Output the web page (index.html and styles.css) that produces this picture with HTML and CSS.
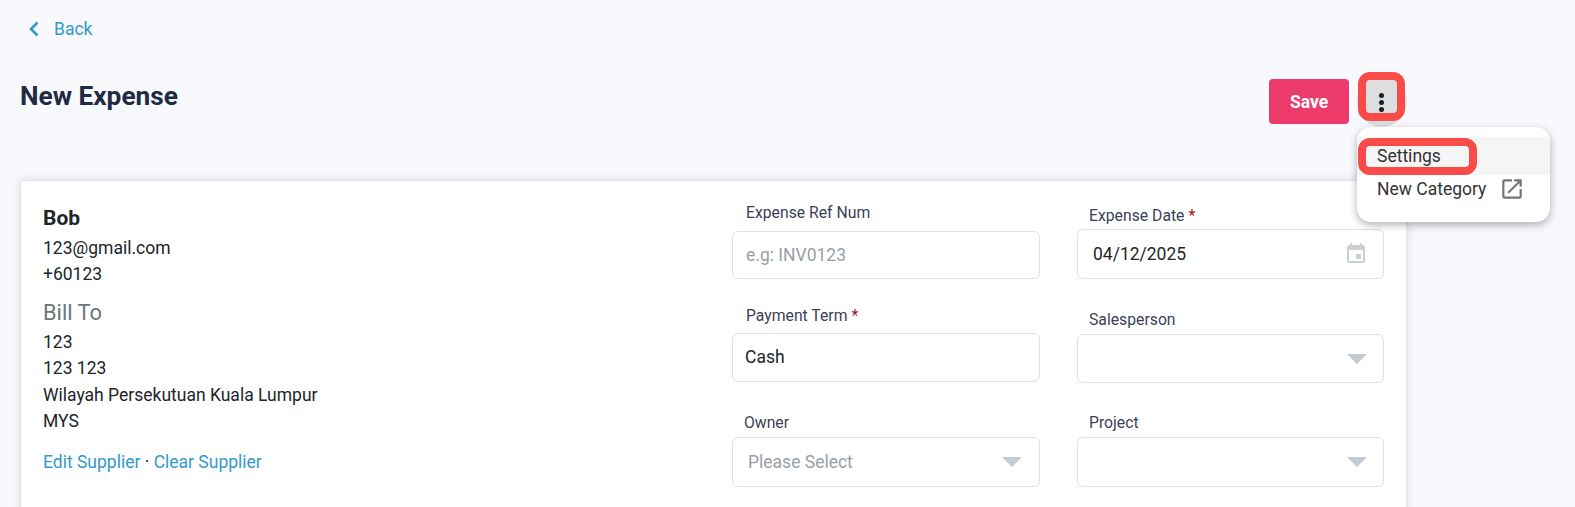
FILE: index.html
```html
<!DOCTYPE html>
<html>

<head>
  <meta charset="utf-8">
  <meta name="viewport" content="width=device-width">
  <title>New Expense</title>
  <link rel="stylesheet" href="styles.css">
</head>

<body>

  <a class="back-link" href="#">
    <svg class="back-icon" width="12" height="16" viewBox="0 0 12 16"><path d="M9.5 1.500 3 8l6.500 6.500" fill="none" stroke="currentColor" stroke-width="2.600"/></svg>
    <span>Back</span>
  </a>

  <div class="page-head">
    <h1>New Expense</h1>
    <div class="actions">
      <button class="save-btn">Save</button>
      <div class="more-wrap">
        <span class="more-halo"></span>
        <button class="more-btn">
          <span class="dot"></span><span class="dot"></span><span class="dot"></span>
        </button>
        <span class="mark mark-more"></span>
        <div class="menu">
          <div class="menu-item hover">Settings</div>
          <div class="menu-item">New Category
            <svg class="ext-icon" width="26" height="26" viewBox="0 0 24 24"><path d="M19 19H5V5h7V3H5a2 2 0 0 0-2 2v14a2 2 0 0 0 2 2h14a2 2 0 0 0 2-2v-7h-2v7zM14 3v2h3.600l-9.800 9.800 1.400 1.400L19 6.400V10h2V3h-7z" fill="#757575"/></svg>
          </div>
          <span class="mark mark-settings"></span>
        </div>
      </div>
    </div>
  </div>

  <div class="card">
    <div class="supplier">
      <div class="supplier-name">Bob</div>
      <div>123@gmail.com</div>
      <div>+60123</div>
      <div class="bill-to">Bill To</div>
      <div>123</div>
      <div>123 123</div>
      <div>Wilayah Persekutuan Kuala Lumpur</div>
      <div>MYS</div>
      <div class="supplier-links"><a href="#">Edit Supplier</a> · <a href="#">Clear Supplier</a></div>
    </div>

    <div class="field-col col-a">
      <div class="field f-ref">
        <label>Expense Ref Num</label>
        <div class="input placeholder">e.g: INV0123</div>
      </div>
      <div class="field f-term">
        <label>Payment Term <span class="req">*</span></label>
        <div class="input">Cash</div>
      </div>
      <div class="field f-owner">
        <label>Owner</label>
        <div class="input select placeholder">Please Select<span class="caret"></span></div>
      </div>
    </div>

    <div class="field-col col-b">
      <div class="field f-date">
        <label>Expense Date <span class="req">*</span></label>
        <div class="input date">04/12/2025
          <svg width="24" height="24" viewBox="0 0 24 24"><path d="M17 12h-5v5h5v-5zM16 1v2H8V1H6v2H5a2 2 0 0 0-2 2v14a2 2 0 0 0 2 2h14a2 2 0 0 0 2-2V5a2 2 0 0 0-2-2h-1V1h-2zm3 18H5V8h14v11z" fill="#cbd0d8"/></svg>
        </div>
      </div>
      <div class="field f-sales">
        <label>Salesperson</label>
        <div class="input select"><span class="caret"></span></div>
      </div>
      <div class="field f-project">
        <label>Project</label>
        <div class="input select"><span class="caret"></span></div>
      </div>
    </div>
  </div>

</body>

</html>
```

FILE: styles.css
```css
html,
body {
  height: 507px;
  overflow: hidden;
}

body {
  margin: 0;
  padding: 0 20px;
  background: #f8f9fd;
  color: #212529;
  font-family: Roboto, sans-serif;
  font-size: 17.5px;
  line-height: 26.25px;
}

a {
  color: #3399cc;
  text-decoration: none;
}

.back-link {
  display: flex;
  align-items: center;
  gap: 14px;
  padding: 16px 0 0 8px;
  height: 26px;
}

.back-icon {
  flex: none;
}

.page-head {
  display: flex;
  justify-content: space-between;
  height: 138px;
  width: 1386px;
}

h1 {
  margin: 36px 0 0;
  font-size: 26.25px;
  line-height: 36px;
  font-weight: 700;
  color: #1f2a44;
}

.actions {
  display: flex;
  align-items: flex-start;
  gap: 17px;
  padding: 37px 9px 0 0;
}

.save-btn {
  width: 80px;
  height: 45px;
  border: none;
  border-radius: 4px;
  background: #ec3a6b;
  color: #fff;
  font: 700 17.5px Roboto, sans-serif;
}

.more-wrap {
  position: relative;
  width: 31px;
}

.more-btn {
  position: relative;
  display: flex;
  flex-direction: column;
  align-items: center;
  gap: 2px;
  width: 31px;
  height: 33px;
  margin-top: 1px;
  padding: 13px 0 0;
  border: none;
  background: #dcdee0;
  overflow: visible;
}

.dot {
  flex: none;
  width: 5px;
  height: 5px;
  border-radius: 50%;
  background: #1b1f27;
}

.more-halo {
  position: absolute;
  left: -9px;
  top: -2px;
  width: 50px;
  height: 50px;
  border-radius: 50%;
  background: #dcdee0;
}

.mark {
  position: absolute;
  border: 8px solid #f94c48;
  pointer-events: none;
}

.mark-more {
  left: -8px;
  top: -7px;
  width: 31px;
  height: 33px;
  border-radius: 12px;
}

.mark-settings {
  left: 1px;
  top: 11px;
  width: 103px;
  height: 21px;
  border-radius: 12px;
}

.menu {
  position: absolute;
  z-index: 5;
  left: -9px;
  top: 48px;
  width: 193px;
  height: 95px;
  padding-top: 10px;
  box-sizing: border-box;
  border-radius: 14px;
  background: #fff;
  box-shadow: 0 3px 8px rgba(0, 0, 0, 0.3);
}

.menu-item {
  display: flex;
  align-items: center;
  height: 38px;
  padding-left: 20px;
  color: #333;
  white-space: nowrap;
}

.menu-item + .menu-item {
  height: 28px;
}

.menu-item.hover {
  background: #f5f5f5;
}

.ext-icon {
  margin-left: 13px;
}

.card {
  display: flex;
  width: 1387px;
  height: 420px;
  box-sizing: border-box;
  border: 1px solid #e2e4e8;
  border-radius: 4px;
  background: #fff;
  box-shadow: 0 0 10px rgba(60, 70, 90, 0.15);
}

.supplier {
  width: 689px;
  flex: none;
  padding: 22px 0 0 22px;
  box-sizing: border-box;
}

.supplier-name {
  font-size: 21px;
  font-weight: 700;
  line-height: 31.5px;
}

.bill-to {
  margin: 13px 0 3px;
  font-size: 21.875px;
  line-height: 26px;
  color: #6c757d;
}

.supplier-links {
  margin-top: 15px;
}

.field-col {
  flex: none;
}

.col-a {
  width: 308px;
  margin: 0 37px 0 22px;
}

.col-b {
  width: 307px;
}

label {
  display: block;
  padding-left: 14px;
  font-size: 15.75px;
  line-height: 20px;
  color: #3b4256;
}

.req {
  color: #a00d1e;
}

.input {
  display: flex;
  align-items: center;
  justify-content: space-between;
  box-sizing: border-box;
  padding: 0 13px;
  border: 1px solid #dfe1e6;
  border-radius: 6px;
  background: #fff;
}

.placeholder {
  color: #9a9ea3;
}

.select {
  padding-left: 15px;
  padding-right: 17px;
}

.col-b .select {
  justify-content: flex-end;
  padding-right: 16px;
}

.caret {
  width: 0;
  height: 0;
  border-left: 10px solid transparent;
  border-right: 10px solid transparent;
  border-top: 10px solid #c5cad3;
}

.date {
  padding-left: 15px;
  padding-right: 15px;
}

.col-b label,
.f-owner label {
  padding-left: 12px;
}

.f-ref {
  margin-top: 22px;
}

.f-ref label {
  margin-bottom: 8px;
}

.f-ref .input {
  height: 48px;
}

.f-term {
  margin-top: 27px;
}

.f-term label {
  margin-bottom: 7px;
}

.f-term .input {
  height: 49px;
  padding-left: 12px;
}

.f-sales .input {
  height: 49px;
}

.f-owner {
  margin-top: 31px;
}

.f-owner label,
.f-sales label,
.f-project label {
  margin-bottom: 4px;
}

.f-owner .input,
.f-project .input,
.f-date .input {
  height: 50px;
}

.f-date {
  margin-top: 25px;
}

.f-date label {
  margin-bottom: 3px;
}

.f-sales {
  margin-top: 31px;
}

.f-project {
  margin-top: 30px;
}
```
